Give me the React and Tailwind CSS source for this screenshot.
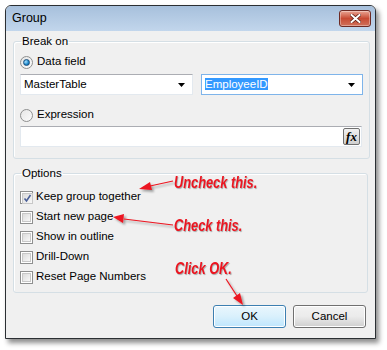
const FONT = { fontFamily: '"Liberation Sans", Arial, sans-serif' };
const NOTE_FONT = { fontFamily: '"Liberation Sans", Arial, sans-serif' };

function Radio({ checked }) {
  return (
    <span className="relative grid h-[13px] w-[13px] shrink-0 place-items-center rounded-full border border-[#8e8f8f] bg-gradient-to-br from-[#e6e6e6] to-[#fbfbfb]">
      {checked && (
        <span className="h-[7px] w-[7px] rounded-full border border-[#1b4f7d] bg-[radial-gradient(circle_at_35%_35%,#a6e0ff,#1a86c9_60%,#0d4f86)]" />
      )}
    </span>
  );
}

function Check({ checked }) {
  return (
    <span className="grid h-[13px] w-[13px] shrink-0 place-items-center border border-[#8e8f8f] bg-white p-[1px]">
      <span className="grid h-full w-full place-items-center border border-[#c8c8c8] bg-gradient-to-br from-[#dcdcdc] to-[#f8f8f8]">
        {checked && (
          <svg width="9" height="9" viewBox="0 0 9 9">
            <path d="M1.5 4.5 L3.5 7 L7.5 1" fill="none" stroke="#4a5f97" strokeWidth="1.6" />
          </svg>
        )}
      </span>
    </span>
  );
}

function Combo({ children, focused, className }) {
  return (
    <div
      className={`flex h-[21px] items-center border bg-white pl-[3px] pr-[7px] ${
        focused ? "border-[#7eb4ea]" : "border-[#e3e9ef] border-t-[#abadb3]"
      } ${className}`}
    >
      <div className="flex-1 text-[11.5px] leading-none">{children}</div>
      <svg width="7" height="4" viewBox="0 0 7 4">
        <path d="M0 0 H7 L3.5 4 Z" fill="#000" />
      </svg>
    </div>
  );
}

const OPTIONS = [
  { label: "Keep group together", checked: true },
  { label: "Start new page" },
  { label: "Show in outline" },
  { label: "Drill-Down" },
  { label: "Reset Page Numbers" }
];

const NOTE =
  "absolute origin-left scale-x-[0.8] whitespace-nowrap text-[16px] font-bold italic leading-none text-[#ec1520] [text-shadow:1px_1px_1px_rgba(0,0,0,0.3)]";

function Annotations() {
  return (
    <div className="pointer-events-none absolute inset-0">
      <svg className="absolute left-0 top-0" width="387" height="350">
        <defs>
          <filter id="sh" x="-20%" y="-20%" width="140%" height="140%">
            <feDropShadow dx="2" dy="2" stdDeviation="1.2" floodColor="#000" floodOpacity="0.35" />
          </filter>
        </defs>
        <g filter="url(#sh)" fill="#ec1520" stroke="#ec1520">
          <path d="M173 181 L150 186" strokeWidth="1.2" fill="none" />
          <path d="M139 189 L150 182 L152 190 Z" stroke="none" />
          <path d="M173 225 L124 219" strokeWidth="1.2" fill="none" />
          <path d="M113 217 L124 214 L123 223 Z" stroke="none" />
          <path d="M226 279 L237 296" strokeWidth="1.2" fill="none" />
          <path d="M243 305 L233 298 L240 293 Z" stroke="none" />
        </g>
      </svg>
      <div className={`${NOTE} left-[174px] top-[175px]`} style={NOTE_FONT}>
        Uncheck this.
      </div>
      <div className={`${NOTE} left-[174px] top-[218px]`} style={NOTE_FONT}>
        Check this.
      </div>
      <div className={`${NOTE} left-[175px] top-[261px]`} style={NOTE_FONT}>
        Click OK.
      </div>
    </div>
  );
}

export default function App() {
  return (
    <div className="relative h-[350px] w-[387px] overflow-hidden bg-white pl-[5px] pt-[5px] text-black" style={FONT}>
      <div className="flex h-[334px] w-[371px] flex-col rounded-t-[6px] border border-[#2b2f33] bg-[#f0f0f0] shadow-[3px_4px_5px_rgba(0,0,0,0.45)]">
        <div className="flex h-[25px] items-center justify-between rounded-t-[5px] bg-gradient-to-b from-[#a7c0dc] to-[#c2d6ec] pl-[6px] pr-[4px]">
          <span className="text-[12.5px] leading-none text-black">Group</span>
          <span className="grid h-[17px] w-[32px] place-items-center rounded-[3px] border border-[#6d2a24] bg-gradient-to-b from-[#e8a493] via-[#c74a33] to-[#d0705a] shadow-[inset_0_0_0_1px_rgba(255,255,255,0.35)]">
            <svg width="11" height="9" viewBox="0 0 11 9">
              <path d="M1.5 1 L9.5 8 M9.5 1 L1.5 8" stroke="#5a1c12" strokeWidth="3.4" strokeLinecap="square" />
              <path d="M1.5 1 L9.5 8 M9.5 1 L1.5 8" stroke="#ffffff" strokeWidth="2" strokeLinecap="square" />
            </svg>
          </span>
        </div>

        <div className="flex flex-1 flex-col px-[7px] pt-[3px]">
          <fieldset className="h-[125px] rounded-[3px] border border-[#d5dfe5] px-[6px] shadow-[inset_1px_1px_0_#fff]">
            <legend className="ml-[1px] px-[1px] text-[11.5px] leading-[15px]">Break on</legend>
            <div className="mt-[5px] flex h-[16px] items-center gap-[4px]">
              <Radio checked />
              <span className="text-[11.5px] leading-none">Data field</span>
            </div>
            <div className="mt-[4px] flex gap-[8px]">
              <Combo className="w-[173px]">MasterTable</Combo>
              <Combo focused className="w-[162px]">
                <span className="bg-[#3399ff] text-white">EmployeeID</span>
              </Combo>
            </div>
            <div className="mt-[12px] flex h-[16px] items-center gap-[4px]">
              <Radio />
              <span className="text-[11.5px] leading-none">Expression</span>
            </div>
            <div className="mt-[3px] flex h-[21px] w-[342px] items-center justify-end border border-[#e3e9ef] border-t-[#abadb3] bg-white pr-[1px]">
              <span className="grid h-[17px] w-[17px] place-items-center rounded-[2px] border border-[#707070] bg-gradient-to-b from-[#f2f2f2] to-[#cfcfcf]">
                <span className="text-[13px] font-bold italic leading-none" style={{ fontFamily: '"Liberation Serif", serif' }}>
                  fx
                </span>
              </span>
            </div>
          </fieldset>

          <fieldset className="mt-[7px] h-[127px] rounded-[3px] border border-[#d5dfe5] px-[6px] shadow-[inset_1px_1px_0_#fff]">
            <legend className="ml-[1px] px-[1px] text-[11.5px] leading-[15px]">Options</legend>
            <div className="mt-[8px] flex flex-col gap-[4px]">
              {OPTIONS.map((o) => (
                <label key={o.label} className="flex h-[16px] items-center gap-[3px]">
                  <Check checked={o.checked} />
                  <span className="text-[11.5px] leading-none">{o.label}</span>
                </label>
              ))}
            </div>
          </fieldset>

          <div className="mt-[12px] flex justify-end gap-[7px] pr-[2px]">
            <button className="h-[23px] w-[73px] rounded-[3px] border border-[#3c7fb1] bg-gradient-to-b from-[#eaf6fd] via-[#d9f0fc] to-[#bee6fd] text-[11.5px] shadow-[inset_0_0_0_1px_#fff]">
              OK
            </button>
            <button className="h-[23px] w-[73px] rounded-[3px] border border-[#707070] bg-gradient-to-b from-[#f2f2f2] via-[#ebebeb] to-[#cfcfcf] text-[11.5px] shadow-[inset_0_0_0_1px_#fff]">
              Cancel
            </button>
          </div>
        </div>
      </div>
      <Annotations />
    </div>
  );
}
